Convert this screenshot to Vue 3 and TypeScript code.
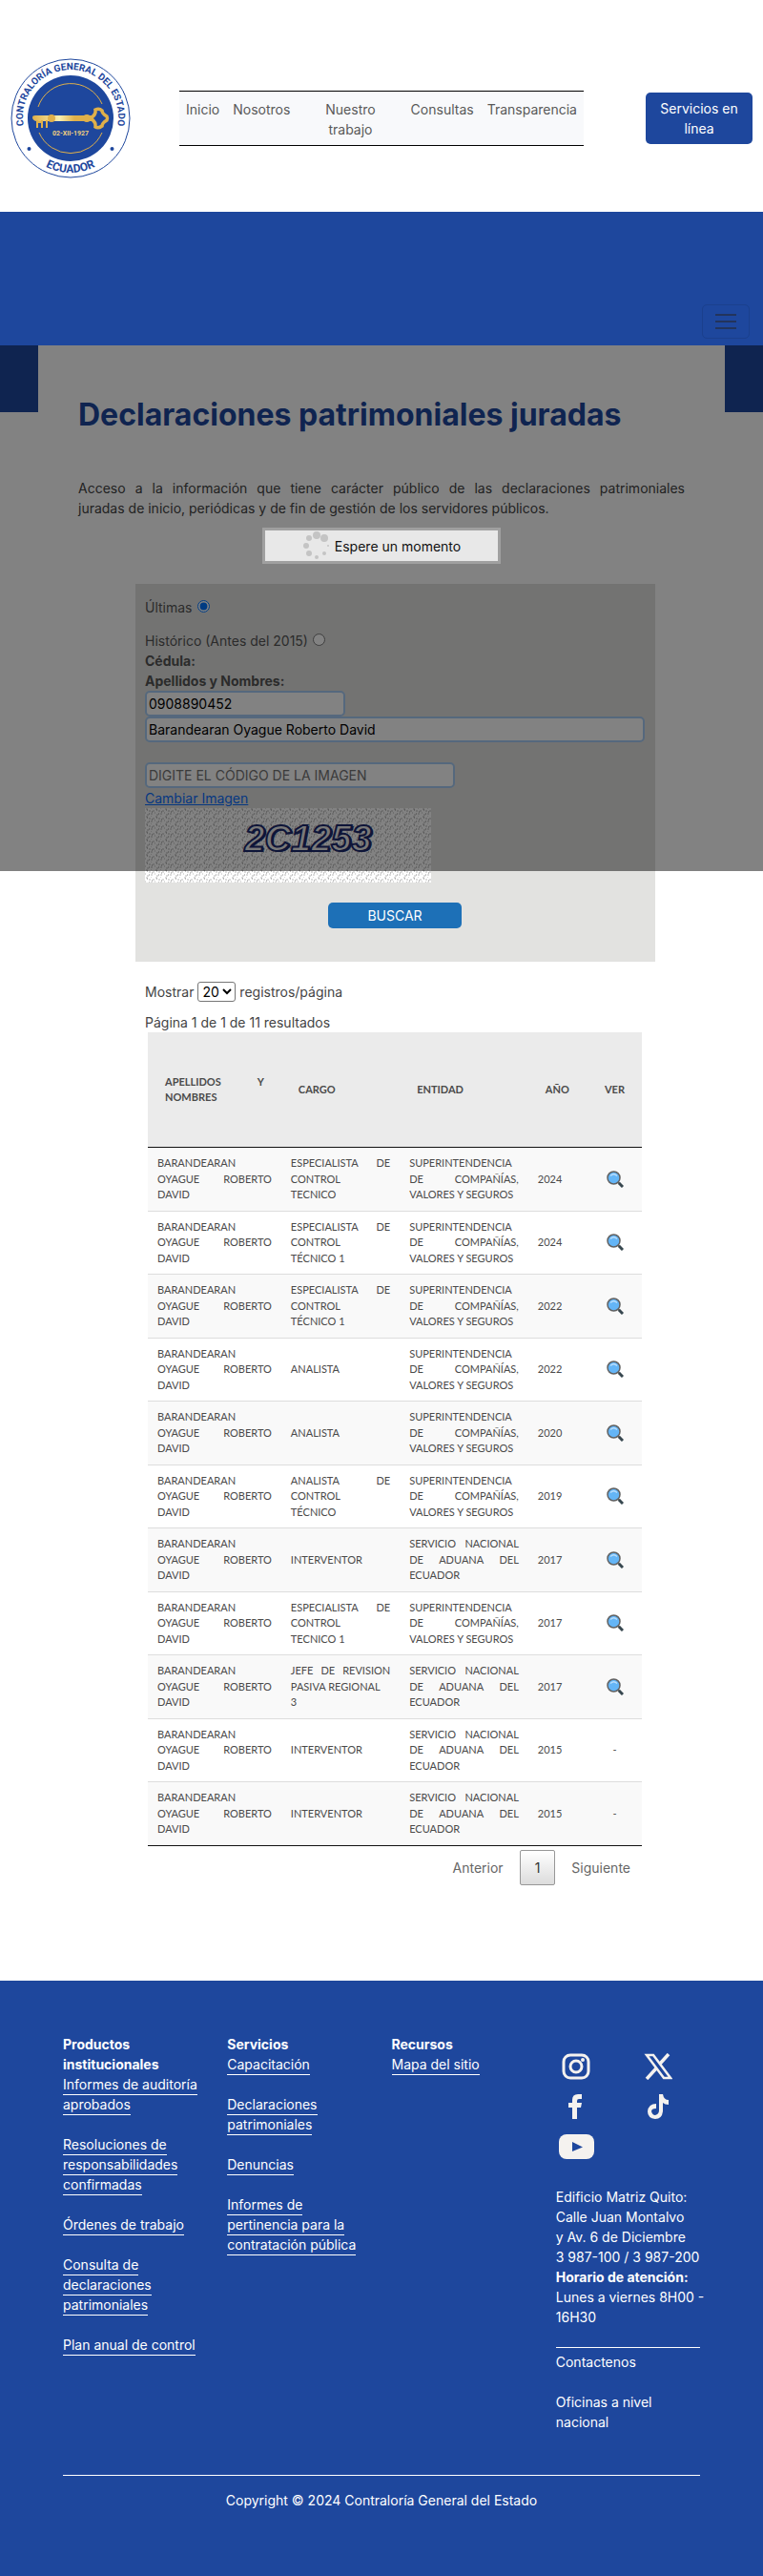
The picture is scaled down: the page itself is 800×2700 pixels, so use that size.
<script setup lang="ts">
import { ref } from 'vue'

interface Declaration {
  role: string
  entity: string
  year: number
  viewable: boolean
}

const navLinks = ['Inicio', 'Nosotros', 'Nuestro trabajo', 'Consultas', 'Transparencia']

const period = ref('ultimas')
const idNumber = ref('0908890452')
const fullName = ref('Barandearan Oyague Roberto David')
const code = ref('')
const pageSize = ref(20)

const person = 'BARANDEARAN OYAGUE ROBERTO DAVID'
const SUPER = 'SUPERINTENDENCIA DE COMPAÑÍAS, VALORES Y SEGUROS'
const ADUANA = 'SERVICIO NACIONAL DE ADUANA DEL ECUADOR'

const declarations: Declaration[] = [
  { role: 'ESPECIALISTA DE CONTROL\nTECNICO', entity: SUPER, year: 2024, viewable: true },
  { role: 'ESPECIALISTA DE CONTROL\nTÉCNICO 1', entity: SUPER, year: 2024, viewable: true },
  { role: 'ESPECIALISTA DE CONTROL\nTÉCNICO 1', entity: SUPER, year: 2022, viewable: true },
  { role: 'ANALISTA', entity: SUPER, year: 2022, viewable: true },
  { role: 'ANALISTA', entity: SUPER, year: 2020, viewable: true },
  { role: 'ANALISTA DE CONTROL\nTÉCNICO', entity: SUPER, year: 2019, viewable: true },
  { role: 'INTERVENTOR', entity: ADUANA, year: 2017, viewable: true },
  { role: 'ESPECIALISTA DE CONTROL\nTECNICO 1', entity: SUPER, year: 2017, viewable: true },
  { role: 'JEFE DE REVISION PASIVA REGIONAL\n3', entity: ADUANA, year: 2017, viewable: true },
  { role: 'INTERVENTOR', entity: ADUANA, year: 2015, viewable: false },
  { role: 'INTERVENTOR', entity: ADUANA, year: 2015, viewable: false },
]

const footerColumns = [
  {
    title: 'Productos institucionales',
    links: [
      'Informes de auditoría aprobados',
      'Resoluciones de responsabilidades confirmadas',
      'Órdenes de trabajo',
      'Consulta de declaraciones patrimoniales',
      'Plan anual de control',
    ],
  },
  {
    title: 'Servicios',
    links: [
      'Capacitación',
      'Declaraciones patrimoniales',
      'Denuncias',
      'Informes de pertinencia para la contratación pública',
    ],
  },
  { title: 'Recursos', links: ['Mapa del sitio'] },
]

const spinnerDots = [
  { x: 15, y: 4, r: 4 },
  { x: 23, y: 7, r: 4 },
  { x: 27, y: 15, r: 1 },
  { x: 23, y: 23, r: 2 },
  { x: 15, y: 27, r: 2 },
  { x: 7, y: 23, r: 3 },
  { x: 4, y: 15, r: 3 },
  { x: 7, y: 7, r: 3 },
]
</script>

<template>
  <div class="page">
    <header class="top">
      <a href="#" class="logo" aria-label="Contraloría General del Estado, Ecuador">
        <svg viewBox="0 0 126 126" width="126" height="126">
          <defs>
            <path id="ring-top" d="M14 72 A50 50 0 1 1 112 72" />
            <path id="ring-bottom" d="M6 63 A57 57 0 0 0 120 63" />
            <linearGradient id="gold" x1="0" x2="1">
              <stop offset="0" stop-color="#e0b04a" />
              <stop offset="0.45" stop-color="#f8eeb0" />
              <stop offset="0.7" stop-color="#e0b04a" />
            </linearGradient>
          </defs>
          <circle cx="63" cy="63" r="62" fill="#fff" stroke="#1e479d" />
          <circle cx="63" cy="63" r="45" fill="#1e479d" />
          <g class="ring-text">
            <text text-anchor="middle"><textPath href="#ring-top" startOffset="50%">CONTRALORÍA GENERAL DEL ESTADO</textPath></text>
            <text class="country" text-anchor="middle"><textPath href="#ring-bottom" startOffset="50%">ECUADOR</textPath></text>
          </g>
          <circle cx="19.500" cy="95" r="2" fill="#1e479d" />
          <circle cx="106.500" cy="95" r="2" fill="#1e479d" />
          <path d="M29 51 A36 36 0 0 1 96 48" fill="none" stroke="#e0b04a" />
          <path d="M30 78 A36 36 0 0 0 96 78" fill="none" stroke="#e0b04a" />
          <path d="M26 60 H86 V66 H27 Q23 65 23 62 Q23 60 26 60Z" fill="url(#gold)" />
          <circle cx="43" cy="63" r="4" fill="#e0b04a" />
          <circle cx="80" cy="63" r="4" fill="#e0b04a" />
          <path d="M28 65V73M33 65V73M29 67H34M38 65V73M37 67H39M37 72H39" stroke="#e0b04a" stroke-width="2" />
          <path d="M84 63 Q90 59 89 54 Q93 52 96 55 Q96 58 101 61 Q102 63 101 65 Q96 68 96 71 Q92 74 89 72 Q90 67 84 63Z" fill="none" stroke="#e0b04a" stroke-width="3.500" />
          <text class="date" x="63" y="81" text-anchor="middle">02-XII-1927</text>
        </svg>
      </a>
      <nav class="menu" aria-label="Principal">
        <a v-for="link in navLinks" :key="link" href="#">{{ link }}</a>
      </nav>
      <a href="#" class="services">Servicios en línea</a>
    </header>

    <div class="band">
      <button type="button" class="toggler" aria-label="Abrir menú">
        <svg viewBox="0 0 22 18" width="22" height="18"><path d="M0 2H22M0 9H22M0 16H22" stroke="#23345c" stroke-width="2" /></svg>
      </button>
    </div>

    <main class="main">
      <article class="card">
        <h1>Declaraciones patrimoniales juradas</h1>
        <p class="intro">
          Acceso a la información que tiene carácter público de las declaraciones patrimoniales
          juradas&nbsp;de&nbsp;inicio, periódicas y de fin de gestión de los servidores públicos.
        </p>

        <form class="search" @submit.prevent>
          <label class="option">Últimas <input v-model="period" type="radio" name="period" value="ultimas" /></label>
          <label class="option">Histórico (Antes del 2015) <input v-model="period" type="radio" name="period" value="historico" /></label>
          <label class="field-label" for="id-number">Cédula:</label>
          <label class="field-label" for="full-name">Apellidos y Nombres:</label>
          <input id="id-number" v-model="idNumber" class="box id-box" type="text" />
          <input id="full-name" v-model="fullName" class="box" type="text" />
          <input v-model="code" class="box code-box" type="text" placeholder="DIGITE EL CÓDIGO DE LA IMAGEN" aria-label="Código de la imagen" />
          <a href="#" class="change">Cambiar Imagen</a>
          <svg class="captcha" viewBox="0 0 300 78" width="300" height="78">
            <defs>
              <pattern id="weave" width="10" height="8" patternUnits="userSpaceOnUse">
                <rect width="10" height="8" fill="#fff" />
                <path d="M1 1H3M6 0H7M4 3H6M8 3H10M0 5H1M6 6H8M2 7H4" stroke="#dcdcdc" stroke-width="2" />
                <path d="M2 2H3M7 4H8M4 6H5" stroke="#888" />
              </pattern>
            </defs>
            <rect width="300" height="78" fill="url(#weave)" />
            <text class="captcha-shadow" x="173" y="46" text-anchor="middle">2C1253</text>
            <text class="captcha-text" x="171" y="45" text-anchor="middle">2C1253</text>
          </svg>
          <button type="submit" class="submit">BUSCAR</button>
        </form>

        <section class="results">
          <div class="length">
            <label for="page-size">Mostrar</label>
            <select id="page-size" v-model="pageSize">
              <option :value="20">20</option>
              <option :value="50">50</option>
            </select>
            registros/página
          </div>
          <div>Página 1 de 1 de 11 resultados</div>
          <table>
            <colgroup>
              <col class="c-name" /><col class="c-role" /><col class="c-entity" /><col class="c-year" /><col class="c-view" />
            </colgroup>
            <thead>
              <tr>
                <th>APELLIDOS Y NOMBRES</th>
                <th>CARGO</th>
                <th>ENTIDAD</th>
                <th>AÑO</th>
                <th class="view">VER</th>
              </tr>
            </thead>
            <tbody>
              <tr v-for="(d, i) in declarations" :key="i">
                <td>{{ person }}</td>
                <td>{{ d.role }}</td>
                <td>{{ d.entity }}</td>
                <td>{{ d.year }}</td>
                <td class="view">
                  <a v-if="d.viewable" href="#" aria-label="Ver declaración">
                    <svg viewBox="0 0 18 18" width="18" height="18">
                      <path d="M11.500 11.500 L13.500 13.500" stroke="#616161" stroke-width="2" />
                      <path d="M13 13 L17 17" stroke="#37474f" stroke-width="3" />
                      <circle cx="7.500" cy="7.500" r="6.500" fill="#64b5f6" stroke="#616161" stroke-width="1.500" />
                      <path d="M4 5.500 Q7.500 2 11 5.500" fill="none" stroke="#bbdefb" stroke-width="1.200" />
                    </svg>
                  </a>
                  <template v-else>-</template>
                </td>
              </tr>
            </tbody>
          </table>
          <nav class="pager" aria-label="Paginación">
            <button type="button">Anterior</button>
            <button type="button" class="current" aria-current="page">1</button>
            <button type="button">Siguiente</button>
          </nav>
        </section>
      </article>

      <div class="overlay"></div>
      <div class="wait" role="status">
        <svg viewBox="0 0 30 30" width="30" height="30">
          <circle v-for="(d, i) in spinnerDots" :key="i" :cx="d.x" :cy="d.y" :r="d.r" fill="#c4c4c4" />
        </svg>
        <span>Espere un momento</span>
      </div>
    </main>

    <footer class="footer">
      <div class="columns">
        <section v-for="col in footerColumns" :key="col.title">
          <h2>{{ col.title }}</h2>
          <ul>
            <li v-for="link in col.links" :key="link"><a href="#">{{ link }}</a></li>
          </ul>
        </section>
        <section class="contact">
          <div class="social">
            <a href="#" aria-label="Instagram">
              <svg viewBox="0 0 30 28" width="30" height="28" fill="none" stroke="#f5f2ef">
                <rect x="2" y="2" width="26" height="24" rx="7" stroke-width="3" />
                <circle cx="15" cy="14" r="6" stroke-width="3" />
                <circle cx="22" cy="7" r="1" stroke-width="2" />
              </svg>
            </a>
            <a href="#" aria-label="X">
              <svg viewBox="0 0 30 28" width="30" height="28" fill="none" stroke="#f5f2ef">
                <path d="M3 2H10L28 26H21Z" stroke-width="2.500" />
                <path d="M26 1L17 11M13 16L3 27" stroke-width="3.500" />
                <path d="M8 4L23 24" stroke-width="1.500" stroke="#1e479d" />
              </svg>
            </a>
            <a href="#" aria-label="Facebook">
              <svg viewBox="0 0 30 28" width="30" height="28" fill="#f5f2ef">
                <path d="M11 27V15H7V10H11V7Q11 1 17 1H21V6H18Q16 6 16 8V10H21L20 15H16V27Z" />
              </svg>
            </a>
            <a href="#" aria-label="TikTok">
              <svg viewBox="0 0 30 28" width="30" height="28" fill="#f5f2ef">
                <path d="M16 1H20Q21 7 26 7V12Q22 12 20 10V19Q19 27 12 27Q4 26 4 19Q5 11 13 11V16Q8 16 8 19Q9 23 12 23Q16 22 16 18Z" />
              </svg>
            </a>
            <a href="#" aria-label="YouTube">
              <svg viewBox="0 0 37 26" width="37" height="26">
                <rect width="37" height="26" rx="8" fill="#f5f2ef" />
                <path d="M14 8L25 13.500L14 18Z" fill="#1e479d" />
              </svg>
            </a>
          </div>
          <address>
            <span>Edificio Matriz Quito:</span>
            <span>Calle Juan Montalvo</span>
            <span>y Av. 6 de Diciembre</span>
            <span>3 987-100 / 3 987-200</span>
            <strong>Horario de atención:</strong>
            <span>Lunes a viernes 8H00 -</span>
            <span>16H30</span>
          </address>
          <div class="more">
            <a href="#">Contactenos</a>
            <a href="#">Oficinas a nivel nacional</a>
          </div>
        </section>
      </div>
      <p class="copyright">Copyright © 2024 Contraloría General del Estado</p>
    </footer>
  </div>
</template>

<style>
body {
  background: #fff;
}
</style>

<style scoped>
.page,
.page * {
  box-sizing: border-box;
}
.page {
  font-family: Inter, "Open Sans", sans-serif;
  font-size: 14px;
  line-height: 21px;
  color: #444;
}
svg {
  display: block;
}
input,
select,
button {
  font: inherit;
}

/* header */
.top {
  display: flex;
  align-items: center;
  padding: 61px 11px 35px;
}
.logo {
  flex: none;
  margin-right: 51px;
}
.ring-text {
  font-family: Roboto, sans-serif;
  font-weight: 700;
  font-size: 10px;
  fill: #1e479d;
}
.country {
  font-size: 12px;
}
.date {
  font-family: Roboto, sans-serif;
  font-weight: 700;
  font-size: 7px;
  fill: #f0d080;
}
.menu {
  flex: 1;
  display: flex;
  padding: 8px 0 6px;
  border-top: 1px solid #000;
  border-bottom: 1px solid #000;
  background: #f8f9fb;
}
.menu a {
  padding: 0 7px;
  color: #595959;
  text-align: center;
  text-decoration: none;
}
.services {
  flex: none;
  width: 112px;
  margin-left: 65px;
  padding: 6px 12px;
  border-radius: 5px;
  background: #1e479d;
  color: #fff;
  text-align: center;
  text-decoration: none;
}
.band {
  display: flex;
  justify-content: flex-end;
  align-items: flex-end;
  height: 140px;
  padding: 0 14px 7px;
  background: #1e479d;
}
.toggler {
  padding: 8px 13px;
  border: 1px solid #1b408d;
  border-radius: 5px;
  background: none;
}

/* main */
.main {
  position: relative;
  background: linear-gradient(#1e479d, #1e479d) top / 100% 70px no-repeat;
}
.card {
  margin: 0 40px;
  padding: 54px 42px 100px;
  background: #fff;
}
h1 {
  margin: 0 0 47px;
  font-size: 32px;
  line-height: 38px;
  font-weight: 700;
  color: #1e479d;
}
.intro {
  margin: 0 0 69px;
  text-align: justify;
}
.overlay {
  position: absolute;
  inset: 0 0 auto;
  height: 551px;
  background: rgba(0, 0, 0, 0.49);
}
.wait {
  position: absolute;
  top: 191px;
  left: 50%;
  width: 250px;
  margin-left: -125px;
  display: flex;
  justify-content: center;
  align-items: center;
  gap: 4px;
  padding: 1px 0;
  border: 3px solid #a0a0a0;
  background: #e8e8e8;
  color: #111;
}

/* search form */
.search {
  display: flex;
  flex-direction: column;
  align-items: flex-start;
  margin: 0 31px 21px 60px;
  padding: 14px 11px 35px 10px;
  background: #e2e2e0;
  color: #555;
}
.option {
  display: flex;
  gap: 5px;
  margin-bottom: 14px;
}
.option + .option {
  margin-bottom: 0;
}
.option input {
  width: 13px;
  height: 13px;
  margin: 3px 0 0;
}
.field-label {
  font-weight: 700;
}
.box {
  width: 100%;
  height: 27px;
  padding: 0 2px;
  border: 2px solid #a8cdf5;
  border-radius: 5px;
  background: #fff;
  color: #000;
}
.id-box {
  width: 40%;
}
.code-box {
  width: 62%;
  margin-top: 21px;
}
.box::placeholder {
  color: #757575;
  opacity: 1;
}
.change {
  color: #0d6efd;
}
.captcha-text,
.captcha-shadow {
  font: italic 700 38px "Liberation Sans", sans-serif;
}
.captcha-text {
  fill: #eee;
  stroke: #1c2a6e;
  stroke-width: 2px;
}
.captcha-shadow {
  fill: #1c2a6e;
}
.submit {
  align-self: center;
  width: 140px;
  height: 27px;
  margin-top: 21px;
  padding: 0;
  border: 0;
  border-radius: 5px;
  background: #1d70b7;
  color: #fff;
}

/* results */
.results {
  margin: 0 42px 0 70px;
}
.length {
  margin-bottom: 11px;
}
.length select {
  height: 21px;
  margin-left: 4px;
  padding: 0;
  color: #000;
  background: #fff;
  border: 1px solid #767676;
  border-radius: 3px;
}
table {
  width: calc(100% - 6px);
  margin: 0 3px;
  table-layout: fixed;
  border-collapse: separate;
  border-spacing: 0;
  border-bottom: 1px solid #111;
  font-family: Lato, sans-serif;
  font-size: 11px;
  line-height: 1.5;
  color: #4a4a4a;
}
.c-name { width: 27%; }
.c-role { width: 24%; }
.c-entity { width: 26%; }
.c-year { width: 12%; }
.c-view { width: 11%; }
th {
  height: 121px;
  padding: 10px 18px;
  border-bottom: 1px solid #111;
  background: #ebebeb;
  font-weight: 700;
  text-align: justify;
}
td {
  padding: 8px 10px;
  border-top: 1px solid #ddd;
  text-align: justify;
  white-space: pre-line;
}
tbody tr:first-child td {
  border-top: 0;
}
tbody tr:nth-child(odd) {
  background: #f9f9f9;
}
.view {
  padding-right: 0;
  padding-left: 0;
  text-align: center;
}
.view svg {
  margin: 0 auto;
}
.pager {
  display: flex;
  justify-content: flex-end;
  gap: 2px;
  margin-top: 4px;
}
.pager button {
  padding: 7px 14px;
  border: 1px solid transparent;
  border-radius: 2px;
  background: none;
  color: #666;
}
.pager .current {
  padding: 7px 15px;
  border-color: #979797;
  background: linear-gradient(#fff, #dcdcdc);
  color: #333;
}

/* footer */
.footer {
  padding: 56px 66px 70px;
  background: #1e479d;
  color: #fff;
}
.footer a {
  color: #fff;
  text-decoration: none;
}
.columns {
  display: grid;
  grid-template-columns: repeat(4, 1fr);
  gap: 21px;
  padding-bottom: 45px;
  border-bottom: 1px solid #fff;
}
.columns section {
  min-width: 0;
}
h2 {
  margin: 0;
  font-size: 14px;
  line-height: 21px;
  font-weight: 700;
}
ul {
  display: grid;
  gap: 21px;
  margin: 0;
  padding: 0;
  list-style: none;
}
li a {
  padding-bottom: 2px;
  border-bottom: 1px solid #fff;
}
.social {
  display: grid;
  grid-template-columns: 43px 43px;
  grid-auto-rows: 42px;
  column-gap: 43px;
  place-items: center;
  margin: 13px 0 21px;
}
address {
  font-style: normal;
  white-space: nowrap;
}
address > * {
  display: block;
}
.more {
  display: grid;
  gap: 21px;
  margin-top: 21px;
  padding-top: 4px;
  border-top: 1px solid #fff;
}
.copyright {
  margin: 15px 0 0;
  text-align: center;
}
</style>
